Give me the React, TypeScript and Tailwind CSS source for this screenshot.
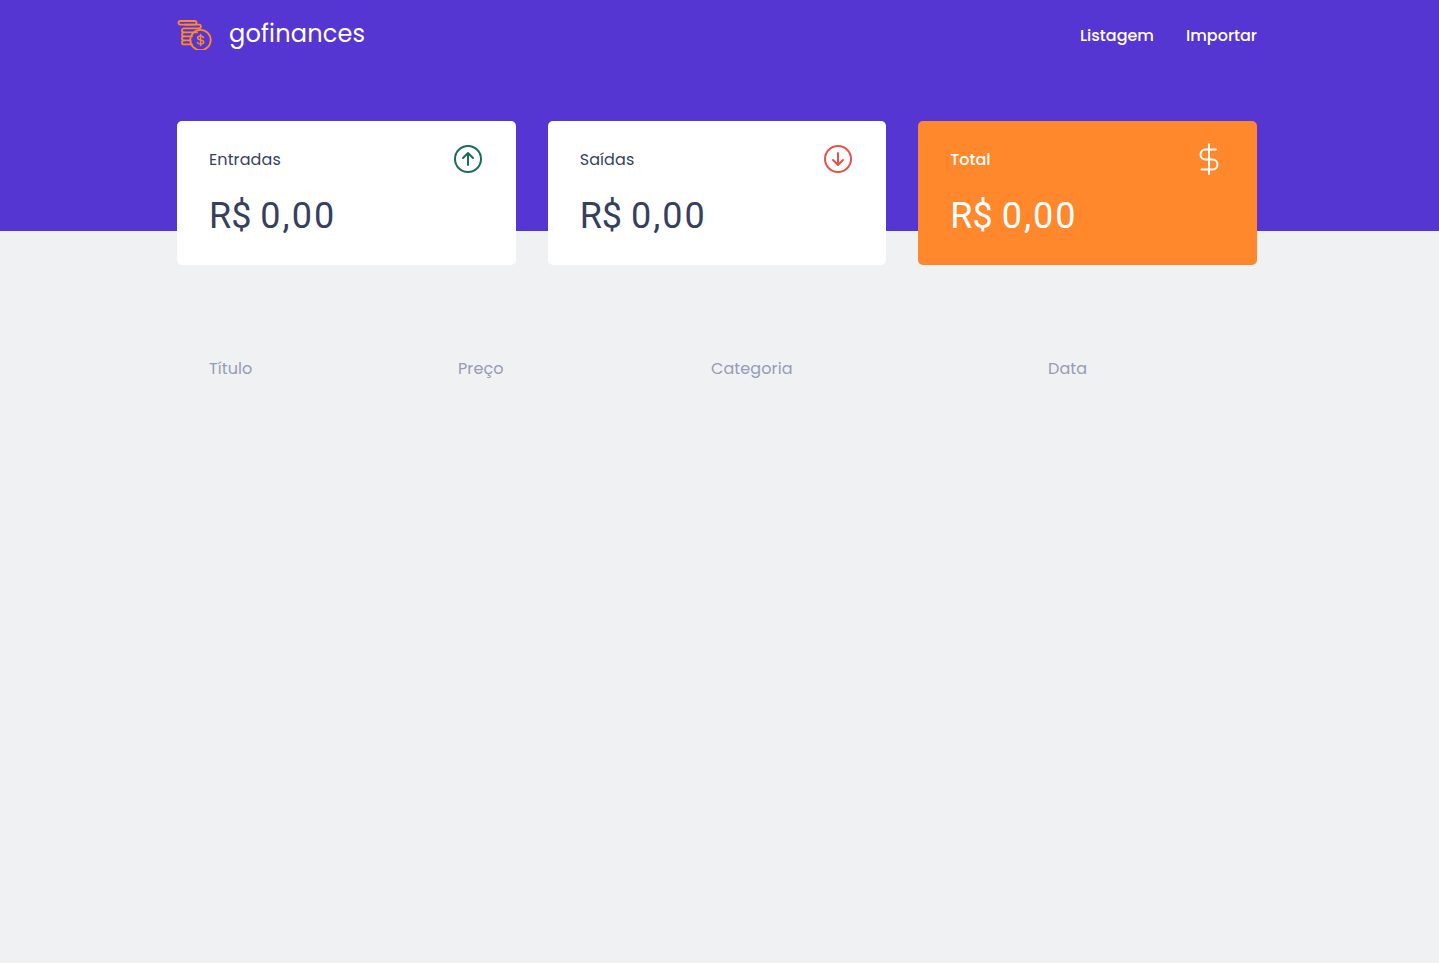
import React from 'react';

const label = "font-['Poppins','Inter',sans-serif]";

function Logo() {
  return (
    <svg width="36" height="32" viewBox="0 0 36 32" fill="none" stroke="#FF872C" strokeWidth="1.8" strokeLinecap="round" strokeLinejoin="round">
      <rect x="1.5" y="3" width="18" height="3.6" rx="1.8" />
      <path d="M8 6.6h14a1.8 1.8 0 0 1 0 3.8H8" />
      <path d="M7 10.4a2 2 0 0 0 0 4h13" />
      <path d="M7 14.4a2 2 0 0 0 0 4h8" />
      <path d="M7 18.4a2 2 0 0 0 0 4h6.5" />
      <path d="M7 22.4a2 2 0 0 0 0 4h8" />
      <circle cx="23.5" cy="22" r="10.2" />
      <path d="M26.5 19.7c-.5-1-1.6-1.6-3-1.6-1.6 0-2.8.8-2.8 2 0 2.7 6 1.3 6 4 0 1.2-1.3 2-3.1 2-1.4 0-2.6-.6-3.1-1.6M23.6 16.4v11.2" strokeWidth="1.5" />
    </svg>
  );
}

function ArrowCircle({ color, down }: { color: string; down?: boolean }) {
  return (
    <svg className="mr-[2px]" width="28" height="28" viewBox="0 0 28 28" fill="none" stroke={color} strokeWidth="2" strokeLinecap="round" strokeLinejoin="round">
      <circle cx="14" cy="14" r="13" />
      {down ? <path d="M14 8v12M9 15l5 5 5-5" /> : <path d="M14 20V8M9 13l5-5 5 5" />}
    </svg>
  );
}

function DollarIcon() {
  return (
    <svg width="32" height="32" viewBox="0 0 32 32" fill="none" stroke="#fff" strokeWidth="2" strokeLinecap="round" strokeLinejoin="round">
      <path d="M16 1v30" />
      <path d="M23 6.5H12.5a5 5 0 0 0 0 10h7a5 5 0 0 1 0 10H8.5" />
    </svg>
  );
}

function Card({ title, icon, highlight }: { title: string; icon: React.ReactNode; highlight?: boolean }) {
  return (
    <div className={`rounded-[5px] pt-[22px] px-[32px] h-[144px] ${highlight ? 'bg-[#FF872C] text-white' : 'bg-white text-[#363F5F]'}`}>
      <header className="flex items-center justify-between h-[32px]">
        <p className={`${label} text-[16px] mt-[2px] ${highlight ? 'font-medium' : 'tracking-[0.1px]'}`}>{title}</p>
        {icon}
      </header>
      <h1 className="font-['Roboto',sans-serif] font-normal text-[36px] leading-[54px] mt-[14px]">
        R$ <span className="tracking-[2px]">0,00</span>
      </h1>
    </div>
  );
}

export default function App() {
  return (
    <div className="min-h-[963px] bg-[#F0F1F3]">
      <header className="bg-[#5636D3] h-[231px]">
        <div className="w-[1080px] ml-[177px] flex items-start justify-between">
          <div className="flex items-center gap-[16px] pt-[18px]">
            <Logo />
            <span className={`${label} text-white text-[24px] tracking-[0.2px] leading-[32px]`}>gofinances</span>
          </div>
          <nav className={`${label} flex gap-[32px] text-white text-[16px] font-medium pt-[24px]`}>
            <a>Listagem</a>
            <a>Importar</a>
          </nav>
        </div>
      </header>
      <main className="w-[1080px] ml-[177px]">
        <section className="grid grid-cols-3 gap-[32px] -mt-[110px]">
          <Card title="Entradas" icon={<ArrowCircle color="#1F6B58" />} />
          <Card title="Saídas" icon={<ArrowCircle color="#E5534B" down />} />
          <Card title="Total" icon={<DollarIcon />} highlight />
        </section>
        <div className={`${label} flex text-[#969CB3] text-[16px] tracking-[0.1px] leading-[24px] mt-[92px] pl-[32px]`}>
          <span className="w-[249px]">Título</span>
          <span className="w-[253px]">Preço</span>
          <span className="w-[337px]">Categoria</span>
          <span>Data</span>
        </div>
      </main>
    </div>
  );
}
